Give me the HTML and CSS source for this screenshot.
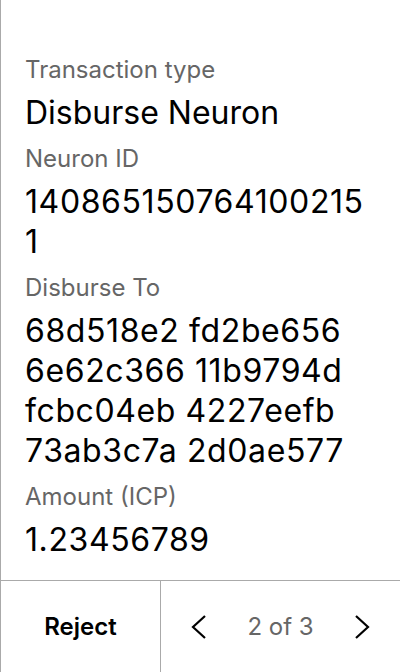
FILE: index.html
```html
<!DOCTYPE html>
<html>
<head>
<meta charset="utf-8">
<link rel="stylesheet" href="styles.css">
</head>
<body>
<div class="screen">
  <main class="details">
    <div class="field">
      <div class="label">Transaction type</div>
      <div class="value">Disburse Neuron</div>
    </div>
    <div class="field">
      <div class="label">Neuron ID</div>
      <div class="value num">140865150764100215<br>1</div>
    </div>
    <div class="field">
      <div class="label">Disburse To</div>
      <div class="value num">68d518e2 fd2be656<br>6e62c366 11b9794d<br>fcbc04eb 4227eefb<br>73ab3c7a 2d0ae577</div>
    </div>
    <div class="field">
      <div class="label">Amount (ICP)</div>
      <div class="value num">1.23456789</div>
    </div>
  </main>
  <footer class="footer">
    <div class="reject">Reject</div>
    <div class="pager">
      <svg class="chev" width="16" height="24" viewBox="0 0 16 24"><path d="M14 1 L2 12 L14 23" fill="none" stroke="#000" stroke-width="2.2"/></svg>
      <span class="count">2 of 3</span>
      <svg class="chev" width="16" height="24" viewBox="0 0 16 24"><path d="M2 1 L14 12 L2 23" fill="none" stroke="#000" stroke-width="2.2"/></svg>
    </div>
  </footer>
</div>
</body>
</html>
```

FILE: styles.css
```css
html, body {
  margin: 0;
  padding: 0;
  background: #fff;
}
body {
  font-family: Inter, "Noto Sans", sans-serif;
  color: #000;
}
.screen {
  width: 399px;
  height: 672px;
  border-left: 1px solid #aaa;
  display: flex;
  flex-direction: column;
}
.details {
  flex: 1;
  padding: 56px 24px 0 24px;
  display: flex;
  flex-direction: column;
  gap: 12px;
}
.field {
  display: flex;
  flex-direction: column;
  gap: 9px;
}
.label {
  font-size: 24px;
  line-height: 28px;
  color: #666;
}
.value {
  font-size: 32px;
  line-height: 40px;
  color: #000;
}
.value.num {
  letter-spacing: 0.6px;
}
.footer {
  height: 91px;
  border-top: 1px solid #aaa;
  display: grid;
  grid-template-columns: 159px 1fr;
}
.reject {
  display: flex;
  align-items: center;
  justify-content: center;
  font-size: 24px;
  font-weight: 600;
}
.pager {
  border-left: 1px solid #aaa;
  display: flex;
  align-items: center;
  justify-content: center;
  gap: 40px;
}
.count {
  font-size: 24px;
  color: #666;
}
```
